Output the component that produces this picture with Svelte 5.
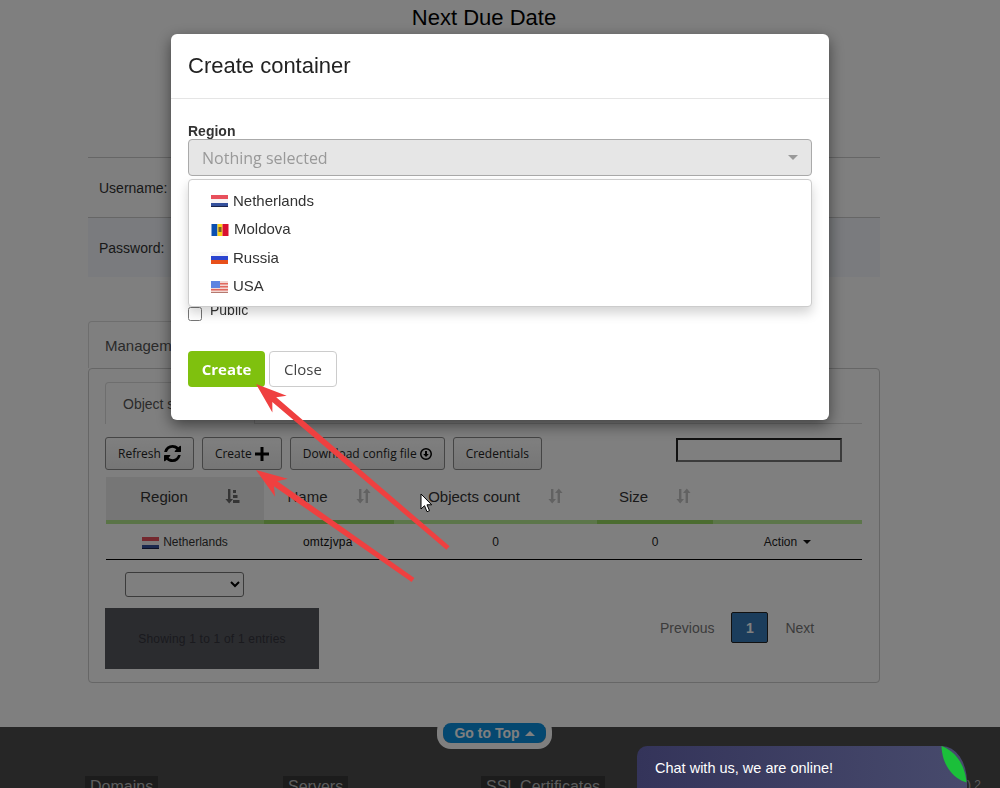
<script>
	const regions = [
		{ name: 'Netherlands', flag: 'nl' },
		{ name: 'Moldova', flag: 'md' },
		{ name: 'Russia', flag: 'ru' },
		{ name: 'USA', flag: 'us' }
	];

	const columns = [
		{ title: 'Region', width: 158, sorted: true, dark: true },
		{ title: 'Name', width: 130, dark: true },
		{ title: 'Objects count', width: 203 },
		{ title: 'Size', width: 116, dark: true },
		{ title: '', width: 149 }
	];

	// red annotation arrows, drawn from tip to tail
	function arrowPoints(tipX, tipY, tailX, tailY) {
		const len = Math.hypot(tailX - tipX, tailY - tipY);
		const dx = (tailX - tipX) / len;
		const dy = (tailY - tipY) / len;
		const at = (along, side) =>
			`${(tipX + dx * along - dy * side).toFixed(1)},${(tipY + dy * along + dx * side).toFixed(1)}`;
		return [
			at(0, 0), at(31, 11), at(24, 3), at(len, 2.4), at(len, -2.4), at(24, -3), at(31, -11)
		].join(' ');
	}
</script>

{#snippet flag(type, w = 17)}
	<svg class="flag" width={w} height="12" viewBox="0 0 17 12">
		{#if type === 'nl'}
			<rect width="17" height="4" fill="#e8505c" />
			<rect y="4" width="17" height="4" fill="#f6f3f4" />
			<rect y="8" width="17" height="4" fill="#34509c" />
			<rect y="11" width="17" height="1" fill="#1a2348" />
		{:else if type === 'md'}
			<rect width="6" height="12" fill="#0b4fb0" />
			<rect x="6" width="5" height="12" fill="#fbd118" />
			<rect x="11" width="6" height="12" fill="#d9102f" />
			<rect x="7" y="3" width="3" height="5" fill="#7d5a2a" />
		{:else if type === 'ru'}
			<rect width="17" height="4" fill="#f4f4f6" />
			<rect y="4" width="17" height="4" fill="#2b45d0" />
			<rect y="8" width="17" height="4" fill="#e8501a" />
		{:else}
			<rect width="17" height="12" fill="#f3d6d2" />
			<rect y="2" width="17" height="1.5" fill="#e0695e" />
			<rect y="5" width="17" height="1.5" fill="#e0695e" />
			<rect y="8" width="17" height="1.5" fill="#e0695e" />
			<rect y="11" width="17" height="1" fill="#b5796f" />
			<rect width="9" height="7" fill="#5f84e0" />
		{/if}
	</svg>
{/snippet}

{#snippet sortIcon(active)}
	<svg class="sort" class:active width="16" height="16" viewBox="0 0 16 16">
		<path d="M4 1h2.4v10H9l-3.8 4.5L1.400 11H4z" />
		{#if active}
			<path d="M9 2h3v3H9zM9 7h4.500v3H9zM9 12h6.500v3H9z" />
		{:else}
			<path d="M10.600 15V5H8l3.800-4.500L15.600 5H13v10z" />
		{/if}
	</svg>
{/snippet}

<div class="page">
	<div class="container">
		<h1>Next Due Date</h1>

		<div class="info-row"><span>Username:</span></div>
		<div class="info-row alt"><span>Password:</span></div>

		<div class="tab outer-tab">Management</div>
		<div class="panel">
			<div class="inner-tabs">
				<div class="tab inner-tab">Object storage</div>
			</div>

			<div class="toolbar">
				<button class="tool">
					Refresh
					<svg width="17" height="17" viewBox="0 128 1536 1536">
						<path d="M1511 1056q0 5-1 7-64 268-268 434.500t-478 166.500q-146 0-282.500-55t-243.500-157l-129 129q-19 19-45 19t-45-19-19-45v-448q0-26 19-45t45-19h448q26 0 45 19t19 45-19 45l-137 137q71 66 161 102t187 36q134 0 250-65t186-179q11-17 53-117 8-23 30-23h192q13 0 22.500 9.500t9.500 22.500zm25-800v448q0 26-19 45t-45 19h-448q-26 0-45-19t-19-45 19-45l138-138q-148-137-349-137-134 0-250 65t-186 179q-11 17-53 117-8 23-30 23h-199q-13 0-22.500-9.500t-9.500-22.500v-7q65-268 270-434.500t480-166.500q146 0 284 55.500t245 156.500l130-129q19-19 45-19t45 19 19 45z" />
					</svg>
				</button>
				<button class="tool">
					Create
					<svg width="14" height="14" viewBox="0 0 14 14">
						<path d="M5.500 0h3v5.500H14v3H8.500V14h-3V8.500H0v-3h5.500z" />
					</svg>
				</button>
				<button class="tool">
					Download config file
					<svg width="12" height="12" viewBox="0 0 12 12">
						<path fill-rule="evenodd" d="M6 0a6 6 0 1 1 0 12A6 6 0 0 1 6 0zm0 1.500a4.500 4.500 0 1 0 0 9 4.500 4.500 0 0 0 0-9zM5 3h2v3h1.800L6 9 3.200 6H5z" />
					</svg>
				</button>
				<button class="tool">Credentials</button>
				<input class="search" type="text" />
			</div>

			<div class="table">
				<div class="thead">
					{#each columns as col}
						<div class="th" class:sorted={col.sorted} class:dark={col.dark} style="width: {col.width}px">
							{#if col.title}
								<span>{col.title}</span>
								{@render sortIcon(col.sorted)}
							{/if}
						</div>
					{/each}
				</div>
				<div class="tbody-row">
					<div class="td region" style="width: 158px">{@render flag('nl')} Netherlands</div>
					<div class="td name" style="width: 130px">omtzjvpa</div>
					<div class="td" style="width: 203px">0</div>
					<div class="td" style="width: 116px">0</div>
					<div class="td action" style="width: 149px">Action <i class="caret"></i></div>
				</div>
			</div>

			<select class="page-size"></select>

			<div class="table-footer">
				<div class="entries">Showing 1 to 1 of 1 entries</div>
				<nav class="pager">
					<span>Previous</span>
					<b>1</b>
					<span>Next</span>
				</nav>
			</div>
		</div>
	</div>

	<footer>
		<a class="go-top" href="#top">Go to Top <i></i></a>
		<div class="foot-col"><h4>Domains</h4></div>
		<div class="foot-col"><h4>Servers</h4></div>
		<div class="foot-col"><h4>SSL Certificates</h4></div>
		<span class="phone">(495) 2</span>
	</footer>
</div>

<div class="backdrop">
	<div class="modal">
		<div class="modal-head">Create container</div>
		<div class="modal-body">
			<div class="label">Region</div>
			<div class="fake-select">
				<span>Nothing selected</span>
				<i></i>
			</div>
			<ul class="dropdown">
				{#each regions as region}
					<li>{@render flag(region.flag, region.flag === 'md' ? 18 : 17)} {region.name}</li>
				{/each}
			</ul>

			<span class="mark first"></span>
			<div class="hidden-input"></div>
			<span class="mark second"></span>

			<label class="public">
				<input type="checkbox" />
				<span>Public</span>
			</label>

			<div class="actions">
				<button class="btn-create">Create</button>
				<button class="btn-close">Close</button>
			</div>
		</div>
	</div>
</div>

<div class="chat">
	<span>Chat with us, we are online!</span>
	<svg class="leaf" width="26" height="37" viewBox="0 0 26 37">
		<path d="M0.500 0C14 5 24 18 25.500 36.500 11 32 1 18 0.500 0z" fill="#1bbf3a" />
	</svg>
</div>

<svg class="arrows" width="1000" height="788" viewBox="0 0 1000 788">
	<polygon points={arrowPoints(256, 384, 448, 548)} />
	<polygon points={arrowPoints(256, 470, 413, 580)} />
</svg>

<svg class="cursor" width="13" height="20" viewBox="0 0 13 20">
	<path d="M1 1v15l3.500-3.300 2.500 6 2.500-1-2.500-5.900h4.700z" fill="#fff" stroke="#000" stroke-width="1" />
</svg>

<style>
	:global(body) {
		margin: 0;
		background: #fff;
		font-family: "Liberation Sans", Arial, sans-serif;
		color: #222;
	}

	.page {
		height: 788px;
		overflow: hidden;
	}

	.container {
		width: 792px;
		margin-left: 88px;
	}

	h1 {
		margin: 0;
		height: 157px;
		padding-top: 5px;
		box-sizing: border-box;
		font-size: 22px;
		line-height: 25px;
		font-weight: 400;
		text-align: center;
		color: #000;
	}

	.info-row {
		height: 60px;
		box-sizing: border-box;
		border-top: 1px solid #ccc;
		padding-left: 11px;
		display: flex;
		align-items: center;
		font-size: 14px;
		color: #333;
	}

	.info-row.alt {
		background: #f4f7fc;
	}

	.tab {
		box-sizing: border-box;
		border: 1px solid #ddd;
		border-bottom: 0;
		border-radius: 4px 4px 0 0;
		font-size: 14px;
		color: #555;
		display: flex;
		align-items: center;
	}

	.outer-tab {
		width: 200px;
		height: 47px;
		margin-top: 44px;
		padding-left: 16px;
		font-size: 15px;
	}

	.panel {
		height: 315px;
		box-sizing: border-box;
		border: 1px solid #ccc;
		border-radius: 4px;
		padding: 13px 17px 0 16px;
	}

	.inner-tabs {
		height: 42px;
		box-sizing: border-box;
		border-bottom: 1px solid #ddd;
	}

	.inner-tab {
		width: 150px;
		height: 42px;
		padding-left: 17px;
		background: #fff;
	}

	.toolbar {
		display: flex;
		gap: 8px;
		margin-top: 13px;
		align-items: flex-start;
	}

	.tool {
		height: 33px;
		box-sizing: border-box;
		padding: 0 12px;
		display: flex;
		align-items: center;
		gap: 3px;
		border: 1px solid #8a8a8a;
		border-radius: 3px;
		background: linear-gradient(#fff, #ececec);
		font-family: "Open Sans", sans-serif;
		font-size: 12px;
		color: #222;
	}

	.search {
		width: 166px;
		height: 24px;
		box-sizing: border-box;
		margin: 1px 0 0 126px;
		border: 2px solid;
		border-color: #222 #777 #777 #222;
		background: transparent;
	}

	.table {
		margin: 7px 0 0 1px;
		width: 756px;
	}

	.thead {
		display: flex;
	}

	.th {
		height: 47px;
		box-sizing: border-box;
		border-bottom: 4px solid #b8ec94;
		padding-bottom: 5px;
		display: flex;
		align-items: center;
		justify-content: center;
		gap: 27px;
		font-size: 15px;
		color: #333;
	}

	.th.dark {
		border-bottom-color: #97d860;
	}

	.th.sorted {
		background: #ececec;
		border-bottom-color: #b4e88e;
		gap: 36px;
		padding-left: 10px;
	}

	.sort {
		fill: #c4c4c4;
		flex: none;
	}

	.sort.active {
		fill: #6a6a6a;
	}

	.tbody-row {
		display: flex;
		height: 36px;
		box-sizing: border-box;
		border-bottom: 1px solid #000;
		font-size: 12px;
		color: #222;
	}

	.td {
		display: flex;
		align-items: center;
		justify-content: center;
	}

	.td.region {
		gap: 4px;
		color: #333;
	}

	.td.name {
		justify-content: flex-start;
		padding-left: 39px;
		box-sizing: border-box;
		color: #111;
		letter-spacing: 0.2px;
	}

	.td.action {
		gap: 6px;
	}

	.caret {
		width: 0;
		height: 0;
		border: 4px solid transparent;
		border-top-color: #111;
		border-bottom: 0;
	}

	.page-size {
		display: block;
		width: 119px;
		height: 25px;
		margin: 12px 0 0 20px;
		background: transparent;
		border: 1px solid #777;
		border-radius: 3px;
	}

	.table-footer {
		display: flex;
		margin-top: 11px;
	}

	.entries {
		width: 214px;
		height: 61px;
		display: flex;
		align-items: center;
		justify-content: center;
		background: #56585f;
		color: #34343c;
		font-size: 12px;
		letter-spacing: 0.2px;
	}

	.pager {
		display: flex;
		align-items: center;
		gap: 17px;
		height: 31px;
		margin: 4px 0 0 341px;
		font-size: 14px;
		color: #777;
	}

	.pager b {
		width: 37px;
		height: 31px;
		box-sizing: border-box;
		display: flex;
		align-items: center;
		justify-content: center;
		background: #367ab8;
		border: 1px solid #222;
		border-radius: 2px;
		color: #fff;
	}

	footer {
		position: relative;
		margin-top: 44px;
		height: 63px;
		background: #4c4c4c;
		display: flex;
		padding: 49px 0 0 85px;
		box-sizing: border-box;
	}

	.foot-col {
		width: 198px;
	}

	h4 {
		display: inline-block;
		margin: 0;
		padding: 0 5px;
		background: #383838;
		color: #bbb;
		font-size: 16px;
		line-height: 22px;
		font-weight: 400;
	}

	.phone {
		margin-left: 264px;
		padding-top: 2px;
		color: #bbb;
		font-size: 12px;
		white-space: nowrap;
	}

	.go-top {
		position: absolute;
		left: 437px;
		top: -10px;
		width: 103px;
		height: 20px;
		border: 6px solid #fff;
		border-top-color: transparent;
		border-radius: 14px;
		background: #0a90e0;
		background-clip: padding-box;
		color: #fff;
		font-size: 14px;
		font-weight: 700;
		display: flex;
		align-items: center;
		justify-content: center;
		gap: 5px;
		text-decoration: none;
	}

	.go-top i {
		width: 0;
		height: 0;
		border: 5px solid transparent;
		border-bottom-color: #fff;
		border-top: 0;
	}

	.backdrop {
		position: fixed;
		inset: 0;
		background: rgba(0, 0, 0, 0.5);
		display: flex;
		justify-content: center;
		align-items: flex-start;
		padding-top: 34px;
		box-sizing: border-box;
	}

	.modal {
		width: 658px;
		height: 386px;
		background: #fff;
		border-radius: 6px;
		box-shadow: 0 5px 15px rgba(0, 0, 0, 0.5);
		position: relative;
	}

	.modal-head {
		height: 65px;
		box-sizing: border-box;
		border-bottom: 1px solid #e5e5e5;
		padding-left: 17px;
		display: flex;
		align-items: center;
		font-size: 22px;
		color: #222;
	}

	.modal-body {
		padding: 25px 17px 0;
	}

	.label {
		height: 15px;
		line-height: 15px;
		font-size: 14px;
		font-weight: 700;
		color: #333;
	}

	.fake-select {
		height: 37px;
		box-sizing: border-box;
		border: 1px solid #aaa;
		border-radius: 4px;
		background: #e6e6e6;
		display: flex;
		align-items: center;
		justify-content: space-between;
		padding: 0 13px 0 13px;
		font-family: "Open Sans", sans-serif;
		font-size: 16px;
		color: #999;
	}

	.fake-select i {
		width: 0;
		height: 0;
		border: 5px solid transparent;
		border-top-color: #999;
		border-bottom: 0;
	}

	.dropdown {
		position: absolute;
		top: 145px;
		left: 17px;
		width: 624px;
		height: 128px;
		box-sizing: border-box;
		margin: 0;
		padding: 6px 0 0 22px;
		list-style: none;
		background: #fff;
		border: 1px solid #ccc;
		border-radius: 4px;
		box-shadow: 0 6px 12px rgba(0, 0, 0, 0.175);
		z-index: 2;
	}

	.dropdown li {
		height: 28.5px;
		display: flex;
		align-items: center;
		gap: 5px;
		font-size: 15px;
		color: #333;
	}

	.flag {
		flex: none;
		margin-top: 2px;
	}

	.mark {
		display: block;
		width: 6px;
		background: #d08a30;
	}

	.mark.first {
		height: 11px;
		margin-top: 27px;
	}

	.hidden-input {
		height: 36px;
		margin-top: 5px;
		border: 1px solid #aaa;
		border-radius: 4px;
		box-sizing: border-box;
	}

	.mark.second {
		height: 8px;
		margin-top: 28px;
	}

	.public {
		display: flex;
		align-items: flex-start;
		gap: 8px;
		margin-top: 11px;
		font-size: 14px;
		line-height: 16px;
		color: #333;
	}

	.public input {
		width: 14px;
		height: 14px;
		margin: 5px 0 0;
	}

	.actions {
		display: flex;
		gap: 4px;
		margin-top: 30px;
	}

	.actions button {
		height: 36px;
		box-sizing: border-box;
		border-radius: 4px;
		font-family: "Open Sans", sans-serif;
		font-size: 15px;
	}

	.btn-create {
		width: 77px;
		border: 0;
		background: #7fc10e;
		color: #fff;
		font-weight: 700;
	}

	.btn-close {
		width: 68px;
		border: 1px solid #ccc;
		background: #fff;
		color: #444;
	}

	.chat {
		position: fixed;
		left: 637px;
		top: 746px;
		width: 330px;
		height: 42px;
		box-sizing: border-box;
		padding: 14px 0 0 18px;
		background: linear-gradient(90deg, #34345a, #474a6c);
		border-radius: 10px 25px 0 0 / 10px 36px 0 0;
		color: #fff;
		font-size: 14.500px;
	}

	.leaf {
		position: absolute;
		right: 0;
		top: 0;
	}

	.arrows {
		position: fixed;
		left: 0;
		top: 0;
		fill: #ef4040;
		pointer-events: none;
	}

	.cursor {
		position: fixed;
		left: 420px;
		top: 493px;
	}
</style>
